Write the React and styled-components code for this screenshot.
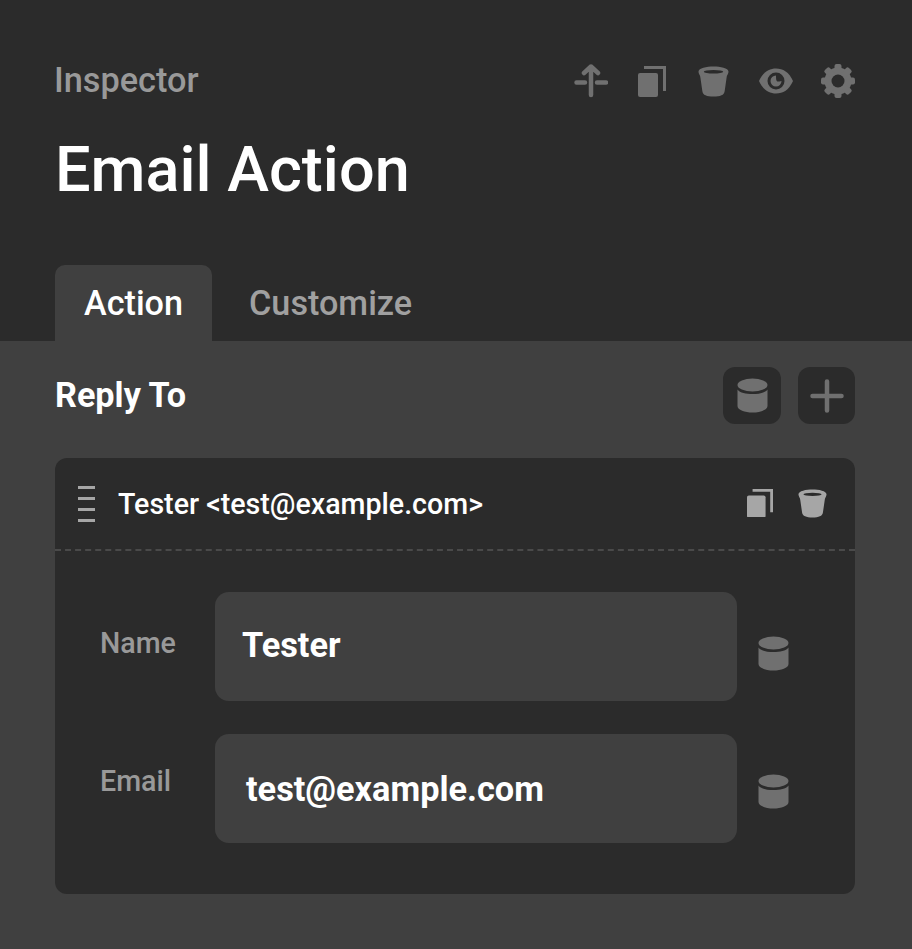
import React from "react";
import styled, { createGlobalStyle } from "styled-components";

const Global = createGlobalStyle`
  html, body { margin: 0; padding: 0; background: #404040; }
  * { box-sizing: border-box; }
  body { font-family: Roboto, "Liberation Sans", sans-serif; }
`;

const Page = styled.div`
  width: 912px;
  height: 949px;
  background: #404040;
  overflow: hidden;
`;
const Header = styled.header`
  height: 341px;
  background: #2b2b2b;
  padding: 60px 57px 0 55px;
  display: flex;
  flex-direction: column;
`;
const TopRow = styled.div`
  display: flex;
  justify-content: space-between;
  align-items: center;
  height: 40px;
`;
const Eyebrow = styled.div`
  font-size: 34.3px;
  font-weight: 500;
  color: #999;
  line-height: 40px;
  margin-left: -1px;
`;
const Tools = styled.div`
  display: flex;
  align-items: center;
  margin-top: 2px;
`;
const Tool = styled.span`
  display: flex;
  margin-left: ${(p) => p.$gap || 0}px;
`;
const Title = styled.h1`
  margin: 30px 0 0;
  font-size: 63px;
  line-height: 80px;
  font-weight: 500;
  color: #fff;
`;
const Tabs = styled.div`
  display: flex;
  margin-top: auto;
`;
const Tab = styled.div`
  height: 76px;
  padding: 0 29px;
  font-size: 34.2px;
  font-weight: 500;
  line-height: 76px;
  border-radius: 10px 10px 0 0;
  color: ${(p) => (p.$active ? "#fff" : "#a0a0a0")};
  background: ${(p) => (p.$active ? "#404040" : "transparent")};
  margin-right: ${(p) => (p.$active ? "8px" : "0")};
`;
const Body = styled.main`
  padding: 26px 57px 0 55px;
`;
const SectionHead = styled.div`
  display: flex;
  justify-content: space-between;
  align-items: center;
  height: 57px;
`;
const SectionTitle = styled.h2`
  margin: 0 0 2px;
  font-size: 34.2px;
  font-weight: 700;
  color: #fff;
`;
const Buttons = styled.div`
  display: flex;
  gap: 17px;
`;
const SquareButton = styled.div`
  width: ${(p) => p.$w}px;
  height: 57px;
  border-radius: 12px;
  background: #2b2b2b;
  display: flex;
  align-items: center;
  justify-content: center;
`;
const Card = styled.section`
  margin-top: 34px;
  width: 800px;
  height: 436px;
  border-radius: 12px;
  background: #2b2b2b;
`;
const CardHead = styled.div`
  height: 93px;
  border-bottom: 2px dashed #4a4a4a;
  display: flex;
  align-items: center;
  padding: 0 28px 2px 23px;
`;
const Grip = styled.div`
  width: 17px;
  height: 37px;
  margin: 3px 23px 0 0;
  display: flex;
  flex-direction: column;
  justify-content: space-between;
`;
const GripLine = styled.span`
  display: block;
  height: 3px;
  background: #a6a6a6;
`;
const ItemName = styled.div`
  flex: 1;
  font-size: 28.6px;
  font-weight: 500;
  color: #fff;
  margin-top: 2px;
`;
const ItemTools = styled.div`
  display: flex;
  align-items: center;
  gap: 25px;
  margin-top: 1px;
`;
const Fields = styled.div`
  padding: 41px 0 0 46px;
  display: flex;
  flex-direction: column;
  gap: 33px;
`;
const Field = styled.div`
  display: flex;
  align-items: flex-start;
`;
const Label = styled.label`
  width: 114px;
  font-size: 28.6px;
  font-weight: 500;
  line-height: 34px;
  margin: ${(p) => p.$top}px 0 0 -1px;
  padding-right: 0;
  flex: 0 0 115px;
  color: #999;
`;
const Input = styled.div`
  width: 522px;
  height: 109px;
  border-radius: 14px;
  background: #404040;
  color: #fff;
  font-size: 34.3px;
  font-weight: 700;
  line-height: ${(p) => p.$line}px;
  padding-left: ${(p) => p.$pad}px;
`;
const FieldIcon = styled.div`
  margin: ${(p) => p.$top}px 0 0 21px;
  display: flex;
`;

const Arrow = () => (
  <svg width="34" height="34" viewBox="0 0 34 34" fill="none" stroke="#707070" strokeWidth="4.5" strokeLinecap="round" strokeLinejoin="round">
    <path d="M17 2.500V31M10 9 17 2.500 24 9M2.500 18.500H11M23 18.500H32" />
  </svg>
);
const Copy = ({ size = 28, color = "#707070" }) => (
  <svg width={size} height={(size * 31) / 28} viewBox="0 0 28 31" fill={color}>
    <rect x="0" y="7" width="20" height="24" rx="2" />
    <path d="M6 0H28V25H25V3H6Z" />
  </svg>
);
const Bucket = ({ size = 31, color = "#707070" }) => (
  <svg width={size} height={size} viewBox="0 0 32 32">
    <path fill={color} d="M.5 6C.5 2 9 .5 16 .5S31.500 2 31.500 6C31.500 8 29.500 10 29.500 12L27.500 26C27 30 23 31.500 16 31.500S5 30 4.500 26L2.500 12C2.500 10 .5 8 .5 6Z" />
    <ellipse cx="16" cy="6" rx="10" ry="1.800" fill="#2b2b2b" />
  </svg>
);
const Eye = () => (
  <svg width="34" height="26" viewBox="0 0 34 26">
    <path fill="#707070" d="M0 13C4 4 10 .5 17 .5S30 4 34 13C30 22 24 25.500 17 25.500S4 22 0 13Z" />
    <circle cx="17" cy="13" r="8.500" fill="#2b2b2b" />
    <path fill="#707070" fillRule="evenodd" d="M17 7.500A5.500 5.500 0 1 0 22.500 13C22.500 13 21 13.500 19 13.500 17.500 13.500 17 12 17 7.500Z" />
  </svg>
);
const Gear = () => (
  <svg width="34" height="34" viewBox="0 0 34 34">
    <circle cx="17" cy="17" r="13.500" fill="#707070" />
    {[0, 45, 90, 135].map((a) => (
      <rect key={a} x="13.500" y="0" width="7" height="34" rx="2" fill="#707070" transform={`rotate(${a} 17 17)`} />
    ))}
    <circle cx="17" cy="17" r="6.500" fill="#2b2b2b" />
  </svg>
);
const Db = () => (
  <svg width="31" height="35" viewBox="0 0 31 35">
    <ellipse cx="15.500" cy="7" rx="15" ry="6.500" fill="#707070" />
    <path fill="#707070" d="M.5 11.500C3 15 9 16 15.500 16S28 15 30.500 11.500V28C30.500 32 23 34.500 15.500 34.500S.5 32 .5 28Z" />
  </svg>
);
const Plus = () => (
  <svg width="34" height="34" viewBox="0 0 34 34" fill="none" stroke="#707070" strokeWidth="4.500" strokeLinecap="round">
    <path d="M17 2.500V31.500M2.500 17H31.500" />
  </svg>
);

export default function App() {
  return (
    <Page>
      <Global />
      <Header>
        <TopRow>
          <Eyebrow>Inspector</Eyebrow>
          <Tools>
            <Tool><Arrow /></Tool>
            <Tool $gap={30}><Copy /></Tool>
            <Tool $gap={32}><Bucket /></Tool>
            <Tool $gap={30}><Eye /></Tool>
            <Tool $gap={28}><Gear /></Tool>
          </Tools>
        </TopRow>
        <Title>Email Action</Title>
        <Tabs>
          <Tab $active>Action</Tab>
          <Tab>Customize</Tab>
        </Tabs>
      </Header>
      <Body>
        <SectionHead>
          <SectionTitle>Reply To</SectionTitle>
          <Buttons>
            <SquareButton $w={58}><Db /></SquareButton>
            <SquareButton $w={57}><Plus /></SquareButton>
          </Buttons>
        </SectionHead>
        <Card>
          <CardHead>
            <Grip>
              <GripLine /><GripLine /><GripLine /><GripLine />
            </Grip>
            <ItemName>Tester &lt;test@example.com&gt;</ItemName>
            <ItemTools>
              <Copy size={26} color="#a6a6a6" />
              <Bucket size={29} color="#a6a6a6" />
            </ItemTools>
          </CardHead>
          <Fields>
            <Field>
              <Label $top={34}>Name</Label>
              <Input $pad={27} $line={107}>Tester</Input>
              <FieldIcon $top={44}><Db /></FieldIcon>
            </Field>
            <Field>
              <Label $top={30}>Email</Label>
              <Input $pad={31} $line={110}>test@example.com</Input>
              <FieldIcon $top={40}><Db /></FieldIcon>
            </Field>
          </Fields>
        </Card>
      </Body>
    </Page>
  );
}
